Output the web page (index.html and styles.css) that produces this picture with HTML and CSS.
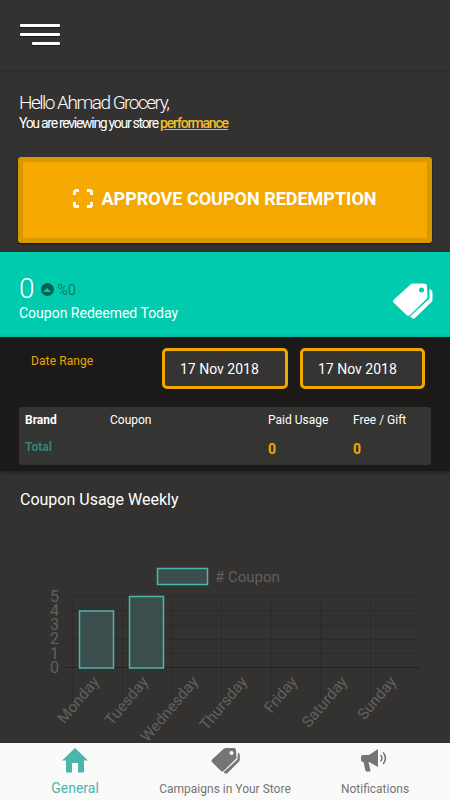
FILE: index.html
```html
<!DOCTYPE html>
<html lang="en">
<head>
    <meta charset="UTF-8">
    <meta name="viewport" content="width=device-width, initial-scale=1.0">
    <title>Store performance</title>
    <link rel="stylesheet" href="styles.css">
</head>
<body>
    <div class="app">
        <!-- Top bar -->
        <header class="topbar">
            <div class="burger">
                <span class="burger-line"></span>
                <span class="burger-line"></span>
                <span class="burger-line burger-short"></span>
            </div>
        </header>

        <section class="greeting">
            <h1 class="hello">Hello Ahmad Grocery,</h1>
            <p class="review">You are reviewing your store <a class="review-link" href="#">performance</a></p>
        </section>

        <div class="approve-wrap">
            <button class="approve">
                <svg class="scan-icon" width="20" height="19" viewBox="0 0 20 19">
                    <path d="M1.500 6V3a1.500 1.500 0 0 1 1.500-1.500h3M14 1.500h3A1.500 1.500 0 0 1 18.500 3v3M18.500 13v3a1.500 1.500 0 0 1-1.500 1.500h-3M6 17.500H3A1.500 1.500 0 0 1 1.500 16v-3" fill="none" stroke="#fff" stroke-width="2.800"/>
                </svg>
                APPROVE COUPON REDEMPTION
            </button>
        </div>

        <!-- Today -->
        <section class="today">
            <div>
                <div class="today-top">
                    <span class="today-count">0</span>
                    <span class="up-badge"><span class="up-arrow"></span></span>
                    <span class="today-percent">%0</span>
                </div>
                <div class="today-label">Coupon Redeemed Today</div>
            </div>
            <svg class="tags-icon" width="40" height="37" viewBox="0 0 40 37">
                <path d="M20 1.500h11a3 3 0 0 1 3 3l.5 10a3 3 0 0 1-1 2.500L17 33a2.500 2.500 0 0 1-3.500 0L1 21a2.500 2.500 0 0 1 0-3.500L17.500 2.500a3.500 3.500 0 0 1 2.500-1zM28.500 5.500a2.500 2.500 0 1 0 0 5 2.500 2.500 0 0 0 0-5z" fill="#fff" fill-rule="evenodd"/>
                <path d="M36.500 6.500l1.500 1.500a3 3 0 0 1 1.500 3v7a3 3 0 0 1-1 2L22.500 35.500a2.500 2.500 0 0 1-3.500.5l-2-1.500 19-17.500a2.500 2.500 0 0 0 .5-2z" fill="#fff"/>
            </svg>
        </section>

        <!-- Date range and table -->
        <section class="range">
            <div class="range-row">
                <div class="range-title">Date Range</div>
                <div class="date-box">17 Nov 2018</div>
                <div class="date-box">17 Nov 2018</div>
            </div>
            <div class="usage">
                <div class="usage-row">
                    <div class="usage-brand">Brand</div>
                    <div class="usage-coupon">Coupon</div>
                    <div class="usage-paid">Paid Usage</div>
                    <div class="usage-free">Free / Gift</div>
                </div>
                <div class="usage-row usage-total">
                    <div class="usage-brand total-label">Total</div>
                    <div class="usage-coupon"></div>
                    <div class="usage-paid total-value">0</div>
                    <div class="usage-free total-value">0</div>
                </div>
            </div>
        </section>

        <!-- Chart -->
        <section class="weekly">
            <h2 class="weekly-title">Coupon Usage Weekly</h2>
            <svg class="chart" width="450" height="240" viewBox="0 0 450 240">
                <g class="grid">
                    <path d="M72.500 76V182M122.500 76V182M172 76V182M221.500 76V182M271.500 76V182M321 76V182M370.500 76V182"/>
                    <path d="M72 76.500H420M72 91H420M72 105.500H420M72 119.500H420M72 133.500H420"/>
                </g>
                <path class="axis" d="M65 147.500H420"/>
                <rect class="bar" x="79.500" y="91" width="34" height="57"/>
                <rect class="bar" x="129.500" y="76.500" width="34" height="71.500"/>
                <rect class="bar" x="157.500" y="48.500" width="50" height="16"/>
                <text class="legend" x="215" y="62"># Coupon</text>
                <g class="y-labels">
                    <text x="59" y="82">5</text>
                    <text x="59" y="96">4</text>
                    <text x="59" y="110">3</text>
                    <text x="59" y="124">2</text>
                    <text x="59" y="139">1</text>
                    <text x="59" y="153">0</text>
                </g>
                <g class="x-labels">
                    <text transform="translate(100 162) rotate(-50)">Monday</text>
                    <text transform="translate(149 162) rotate(-50)">Tuesday</text>
                    <text transform="translate(199 162) rotate(-50)">Wednesday</text>
                    <text transform="translate(248 162) rotate(-50)">Thursday</text>
                    <text transform="translate(298 162) rotate(-50)">Friday</text>
                    <text transform="translate(348 162) rotate(-50)">Saturday</text>
                    <text transform="translate(397 162) rotate(-50)">Sunday</text>
                </g>
            </svg>
        </section>

        <!-- Tabs -->
        <nav class="tabs">
            <a class="tab tab-general" href="#">
                <svg width="26" height="25" viewBox="0 0 26 25">
                    <path d="M13 0L26 12.500H22V24.500H16V15H10V24.500H4V12.500H0z" fill="#4db6ac"/>
                </svg>
                <span>General</span>
            </a>
            <a class="tab tab-campaigns" href="#">
                <svg width="29" height="27" viewBox="0 0 29 27">
                    <path d="M15 1h8a2 2 0 0 1 2 2l.5 7.500a2 2 0 0 1-.7 1.500L12.500 24a2 2 0 0 1-2.500 0L1 15a2 2 0 0 1 0-2.500L13 1.500a2.500 2.500 0 0 1 2-.5zM20.500 4a2 2 0 1 0 0 4 2 2 0 0 0 0-4z" fill="#757575" fill-rule="evenodd"/>
                    <path d="M27 5.500l1 1a2 2 0 0 1 .8 1.500v5a2 2 0 0 1-.7 1.500L16.500 26a2 2 0 0 1-2.500.300l-1.500-1 13.500-12.500a2 2 0 0 0 .500-1.500z" fill="#757575"/>
                </svg>
                <span>Campaigns in Your Store</span>
            </a>
            <a class="tab tab-notify" href="#">
                <svg width="28" height="23" viewBox="0 0 28 23">
                    <path d="M0 8a2 2 0 0 1 2-2h6l9-6v18l-9-5H7.500l2 8.500a.800.800 0 0 1-.8 1H5.500a1 1 0 0 1-1-.8L2.500 13H2a2 2 0 0 1-2-2z" fill="#757575"/>
                    <path d="M19.500 6a4.500 4.500 0 0 1 0 6.500M22 3.500a8 8 0 0 1 0 11.500" fill="none" stroke="#757575" stroke-width="1.600"/>
                </svg>
                <span>Notifications</span>
            </a>
        </nav>
    </div>
</body>
</html>
```

FILE: styles.css
```css
* {
    box-sizing: border-box;
}
body {
    margin: 0;
    font-family: Roboto, "Noto Sans", sans-serif;
    background-color: #333231;
    color: #fff;
}
.app {
    width: 450px;
    height: 800px;
    overflow: hidden;
    display: flex;
    flex-direction: column;
}

.topbar {
    height: 70px;
    flex: none;
    padding: 24px 20px 0;
    box-shadow: 0 1px 3px rgba(0, 0, 0, 0.2);
}
.burger {
    width: 40px;
    display: flex;
    flex-direction: column;
    align-items: flex-end;
    gap: 6px;
}
.burger-line {
    width: 40px;
    height: 3px;
    background-color: #fff;
    border-radius: 1px;
    box-shadow: 0 1px 1px rgba(0, 0, 0, 0.5);
}
.burger-short {
    width: 28px;
}

.greeting {
    height: 87px;
    flex: none;
    padding: 21px 19px 0;
}
.hello {
    margin: 0;
    font-size: 19px;
    line-height: 24px;
    font-weight: 300;
    letter-spacing: -1.500px;
}
.review {
    margin: 0;
    font-size: 14px;
    line-height: 16px;
    letter-spacing: -1.290px;
}
.review-link {
    color: #f0bd2c;
    font-weight: 500;
    letter-spacing: -1.150px;
}

.approve-wrap {
    height: 95px;
    flex: none;
    padding: 0 18px;
}
.approve {
    width: 414px;
    height: 86px;
    display: flex;
    align-items: center;
    justify-content: center;
    gap: 8px;
    background-color: #f5a900;
    border: 5px solid #d69a00;
    border-radius: 3px;
    box-shadow: 0 1px 2px rgba(0, 0, 0, 0.6);
    color: #fff;
    font-family: inherit;
    font-size: 18px;
    font-weight: 700;
    padding: 0 0 3px;
}

.today {
    height: 85px;
    flex: none;
    padding: 21px 17px 0 19px;
    display: flex;
    justify-content: space-between;
    align-items: flex-start;
    background-color: #00cbae;
}
.today-top {
    display: flex;
    align-items: center;
    height: 30px;
}
.today-count {
    font-size: 28px;
    font-weight: 300;
}
.up-badge {
    width: 13px;
    height: 13px;
    margin: 3px 4px 0 6px;
    border-radius: 50%;
    background-color: #06604f;
    display: flex;
    align-items: center;
    justify-content: center;
}
.up-arrow {
    width: 0;
    height: 0;
    border-left: 4px solid transparent;
    border-right: 4px solid transparent;
    border-bottom: 4px solid #00cbae;
}
.today-percent {
    margin-top: 4px;
    font-size: 14px;
    font-weight: 300;
    color: #06604f;
}
.today-label {
    margin-top: 1px;
    font-size: 14px;
    line-height: 18px;
}
.tags-icon {
    margin-top: 9px;
}

.range {
    height: 134px;
    flex: none;
    background-color: #1b1a19;
    border-top: 1px solid #1b1a19;
    box-shadow: 0 1px 4px rgba(0, 0, 0, 0.4);
    padding: 10px 19px 0;
}
.range-row {
    display: flex;
    height: 41px;
}
.range-title {
    width: 143px;
    padding: 6px 0 0 12px;
    font-size: 12px;
    letter-spacing: 0.1px;
    color: #eaa400;
}
.date-box {
    width: 126px;
    height: 41px;
    margin-right: 12px;
    padding: 0 0 0 15px;
    display: flex;
    align-items: center;
    border: 3px solid #f0a800;
    border-radius: 5px;
    background-color: #353433;
    font-size: 14px;
}
.date-box:last-child {
    width: 125px;
    margin-right: 0;
}
.usage {
    margin-top: 18px;
    height: 58px;
    border-radius: 3px;
    background-color: #343433;
    font-size: 12px;
}
.usage-row {
    display: flex;
    height: 26px;
    padding-top: 6px;
    line-height: 14px;
}
.usage-total {
    height: 32px;
    padding-top: 7px;
}
.usage-brand {
    width: 91px;
    padding-left: 6px;
    font-weight: 700;
}
.usage-coupon {
    width: 158px;
}
.usage-paid {
    width: 85px;
}
.total-label {
    color: #2f8673;
}
.total-value {
    padding-top: 2px;
    font-weight: 700;
    font-size: 14px;
    color: #f0a800;
}

.weekly {
    flex: 1;
    min-height: 0;
    overflow: hidden;
}
.weekly-title {
    margin: 0;
    padding: 19px 20px 0;
    font-size: 16px;
    line-height: 20px;
    font-weight: 400;
}
.chart {
    display: block;
    margin-top: 10px;
}
.chart text {
    font-family: Roboto, sans-serif;
    fill: #61605f;
}
.grid path {
    fill: none;
    stroke: #2c2b2a;
    stroke-width: 1;
}
.axis {
    fill: none;
    stroke: #242322;
    stroke-width: 1;
}
.bar {
    fill: #3b4e4d;
    stroke: #4db6ac;
    stroke-width: 1.500;
}
.legend {
    font-size: 15px;
}
.y-labels text {
    font-size: 16px;
    text-anchor: end;
}
.x-labels text {
    font-size: 15.500px;
    text-anchor: end;
}

.tabs {
    height: 57px;
    flex: none;
    display: flex;
    background-color: #fafafa;
}
.tab {
    width: 150px;
    height: 57px;
    display: flex;
    flex-direction: column;
    align-items: center;
    padding-top: 4px;
    text-decoration: none;
    color: #757575;
    font-size: 12px;
}
.tab svg {
    height: 27px;
}
.tab span {
    margin-top: 8px;
}
.tab-general {
    color: #4db6ac;
    font-size: 14px;
}
.tab-general span {
    margin-top: 6px;
}
```
